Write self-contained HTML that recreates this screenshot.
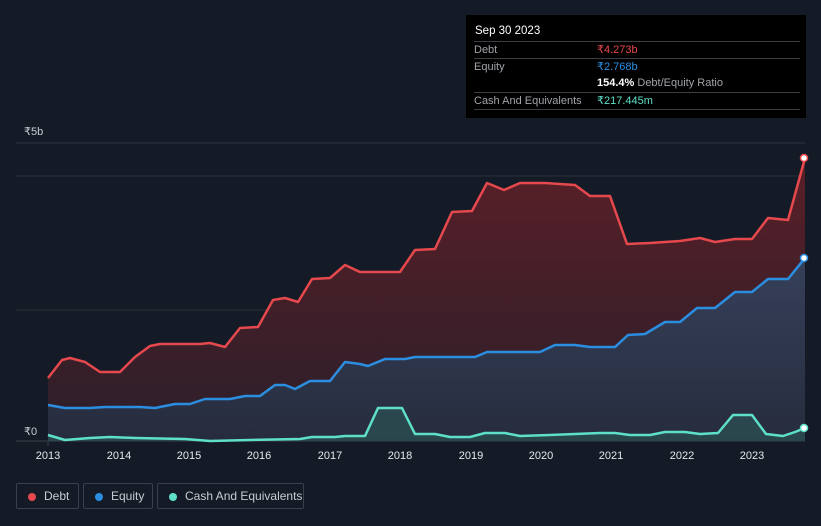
<!DOCTYPE html>
<html><head><meta charset="utf-8"><style>
body{margin:0;background:#151b26;width:821px;height:526px;overflow:hidden;font-family:"Liberation Sans",Arial,sans-serif;position:relative}
.tt{position:absolute;left:466px;top:15px;width:340px;height:103px;background:#000;color:#fff;font-size:11px}
.tt .h{position:absolute;left:9px;top:10px;font-size:11.5px}
.row{position:absolute;left:8px;width:326px;border-top:1px solid #3a3d44;height:17px;line-height:17px}
.row .l{position:absolute;left:0;color:#a0a3a8}
.row .v{position:absolute;left:123px}
.lg{position:absolute;top:483px;height:26px;border:1px solid #3a404b;border-radius:2px;color:#c8ccd2;font-size:12px;line-height:26px;box-sizing:border-box}
.lg i{position:absolute;left:11px;top:9px;width:8px;height:8px;border-radius:50%}
.lg span{position:absolute;left:27px;top:-1px}
.ax{position:absolute;top:450px;color:#e6e8eb;font-size:11px;width:40px;text-align:center}
</style></head><body>
<svg width="821" height="526" style="position:absolute;left:0;top:0">
<defs>
<linearGradient id="dg" x1="0" y1="0" x2="0" y2="1"><stop offset="0" stop-color="#5a1f27"/><stop offset="1" stop-color="#2a1f2a"/></linearGradient>
<linearGradient id="eg" x1="0" y1="0" x2="0" y2="1"><stop offset="0" stop-color="#36405a"/><stop offset="1" stop-color="#262c3d"/></linearGradient>
</defs>
<line x1="16" y1="143" x2="805" y2="143" stroke="#2f3540"/>
<line x1="16" y1="176" x2="805" y2="176" stroke="#2a303b"/>
<line x1="16" y1="310" x2="805" y2="310" stroke="#2a303b"/>
<line x1="16" y1="441" x2="805" y2="441" stroke="#3a404b"/>
<polygon fill="url(#dg)" points="48,441 48,378 62,360 70,358 85,362 100,372 120,372 135,357 150,346 160,344 200,344 210,343 225,347 240,328 258,327 273,300 285,298 298,302 312,279 330,278 345,265 360,272 400,272 415,250 435,249 452,212 472,211 487,183 504,190 520,183 545,183 575,185 590,196 610,196 627,244 650,243 680,241 700,238 715,242 735,239 752,239 768,218 788,220 805,158 805,441"/>
<polygon fill="url(#eg)" points="48,441 48,405 65,408 90,408 105,407 140,407 155,408 175,404 190,404 205,399 230,399 245,396 260,396 275,385 285,385 295,389 310,381 330,381 345,362 360,364 368,366 385,359 405,359 415,357 475,357 487,352 540,352 555,345 575,345 590,347 615,347 628,335 645,334 665,322 680,322 697,308 715,308 735,292 752,292 768,279 788,279 805,258 805,441"/>
<polygon fill="#2b4d50" opacity="0.8" points="48,441 48,435 65,440 90,438 110,437 135,438 185,439 210,441 250,440 300,439 312,437 335,437 345,436 365,436 378,408 402,408 415,434 435,434 450,437 470,437 485,433 505,433 520,436 550,435 575,434 600,433 615,433 630,435 650,435 665,432 685,432 700,434 718,433 733,415 752,415 766,434 783,436 795,432 805,428 805,441"/>
<g fill="none" stroke-width="2.5" stroke-linejoin="round">
<polyline stroke="#e5484d" points="48,378 62,360 70,358 85,362 100,372 120,372 135,357 150,346 160,344 200,344 210,343 225,347 240,328 258,327 273,300 285,298 298,302 312,279 330,278 345,265 360,272 400,272 415,250 435,249 452,212 472,211 487,183 504,190 520,183 545,183 575,185 590,196 610,196 627,244 650,243 680,241 700,238 715,242 735,239 752,239 768,218 788,220 805,158"/>
<polyline stroke="#2b8ee0" points="48,405 65,408 90,408 105,407 140,407 155,408 175,404 190,404 205,399 230,399 245,396 260,396 275,385 285,385 295,389 310,381 330,381 345,362 360,364 368,366 385,359 405,359 415,357 475,357 487,352 540,352 555,345 575,345 590,347 615,347 628,335 645,334 665,322 680,322 697,308 715,308 735,292 752,292 768,279 788,279 805,258"/>
<polyline stroke="#5ee0c8" points="48,435 65,440 90,438 110,437 135,438 185,439 210,441 250,440 300,439 312,437 335,437 345,436 365,436 378,408 402,408 415,434 435,434 450,437 470,437 485,433 505,433 520,436 550,435 575,434 600,433 615,433 630,435 650,435 665,432 685,432 700,434 718,433 733,415 752,415 766,434 783,436 795,432 805,428"/>
</g>
<circle cx="804" cy="158" r="3.5" fill="#fff" stroke="#e5484d" stroke-width="1.5"/>
<circle cx="804" cy="258" r="3.5" fill="#fff" stroke="#2b8ee0" stroke-width="1.5"/>
<circle cx="804" cy="428" r="3.5" fill="#fff" stroke="#5ee0c8" stroke-width="1.5"/>
<g stroke="#3a404b"><line x1="48" y1="441" x2="48" y2="446"/></g>
</svg>
<div style="position:absolute;left:24px;top:125px;color:#c8ccd2;font-size:11px">₹5b</div>
<div style="position:absolute;left:24px;top:425px;color:#c8ccd2;font-size:11px">₹0</div>
<div class="ax" style="left:28px">2013</div><div class="ax" style="left:99px">2014</div><div class="ax" style="left:169px">2015</div><div class="ax" style="left:239px">2016</div><div class="ax" style="left:310px">2017</div><div class="ax" style="left:380px">2018</div><div class="ax" style="left:451px">2019</div><div class="ax" style="left:521px">2020</div><div class="ax" style="left:591px">2021</div><div class="ax" style="left:662px">2022</div><div class="ax" style="left:732px">2023</div>
<div class="tt">
<div class="h">Sep 30 2023</div>
<div class="row" style="top:26px"><span class="l">Debt</span><span class="v" style="color:#e5484d">₹4.273b</span></div>
<div class="row" style="top:43px"><span class="l">Equity</span><span class="v" style="color:#2b8ee0">₹2.768b</span></div>
<div class="row" style="top:60px;border-top:none"><span class="v"><b>154.4%</b> <span style="color:#a0a3a8">Debt/Equity Ratio</span></span></div>
<div class="row" style="top:77px"><span class="l">Cash And Equivalents</span><span class="v" style="color:#5ee0c8">₹217.445m</span></div>
<div class="row" style="top:94px;height:0"></div>
</div>
<div class="lg" style="left:16px;width:63px"><i style="background:#e5484d"></i><span>Debt</span></div>
<div class="lg" style="left:83px;width:70px"><i style="background:#2b8ee0"></i><span>Equity</span></div>
<div class="lg" style="left:157px;width:147px"><i style="background:#5ee0c8"></i><span>Cash And Equivalents</span></div>
</body></html>
